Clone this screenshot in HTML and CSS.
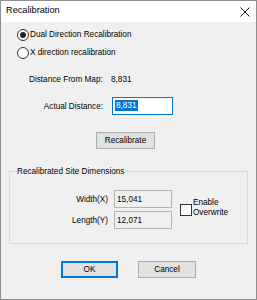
FILE: index.html
```html
<!DOCTYPE html>
<html>
<head>
<meta charset="utf-8">
<link rel="stylesheet" href="styles.css">
</head>
<body>
<div class="window">
  <div class="titlebar">
    <span class="title">Recalibration</span>
    <svg class="close" width="10" height="10" viewBox="0 0 10 10"><path d="M0.5 0.5L9.5 9.5M9.5 0.5L0.5 9.5" stroke="#111" stroke-width="1" fill="none"/></svg>
  </div>
  <div class="client">
    <div class="radio-row r1"><span class="radio checked"></span><span>Dual Direction Recalibration</span></div>
    <div class="radio-row r2"><span class="radio"></span><span>X direction recalibration</span></div>
    <div class="dist-grid">
      <span class="info-label">Distance From Map:</span><span class="info-value">8,831</span>
      <span class="actual-label">Actual Distance:</span><div class="edit focused"><span class="sel">8,831</span></div>
    </div>
    <div class="recal-row"><div class="btn recal">Recalibrate</div></div>
    <fieldset class="group">
      <legend>Recalibrated Site Dimensions</legend>
      <div class="group-body">
        <div class="dims">
          <span class="dim-label">Width(X)</span><div class="edit ro">15,041</div>
          <span class="dim-label">Length(Y)</span><div class="edit ro">12,071</div>
        </div>
        <div class="check-wrap"><span class="checkbox"></span><span class="check-label">Enable<br>Overwrite</span></div>
      </div>
    </fieldset>
    <div class="buttons"><div class="btn ok">OK</div><div class="btn cancel">Cancel</div></div>
  </div>
</div>
</body>
</html>
```
FILE: styles.css
```css
html, body { margin: 0; padding: 0; background: #f0f0f0; }
body { font-family: "Liberation Sans", Arial, sans-serif; font-size: 8.2px; color: #000; }
.window {
  width: 257px; height: 300px; box-sizing: border-box;
  border: 1px solid #8f8f8f; background: #f0f0f0;
}
.titlebar {
  height: 21px; background: #fff; display: flex; justify-content: space-between;
  align-items: flex-start; padding: 0 6px 0 5px;
}
.title { font-size: 9.2px; line-height: 12px; margin-top: 3px; color: #000; }
.close { margin-top: 6px; }
.client { padding: 0; }
.radio-row { display: flex; align-items: center; height: 13px; line-height: 13px; margin-left: 16px; }
.r1 { margin-top: 6px; }
.r2 { margin-top: 5px; }
.radio {
  width: 12px; height: 12px; box-sizing: border-box; border: 1px solid #333;
  border-radius: 50%; background: #fff; margin-right: 1px; position: relative; flex: none;
}
.radio.checked::after {
  content: ""; position: absolute; left: 2px; top: 2px; width: 6px; height: 6px;
  border-radius: 50%; background: #222;
}
.dist-grid {
  display: grid; grid-template-columns: 83px 61px; row-gap: 11px;
  margin: 14px 0 0 28px; align-items: center;
}
.info-label, .info-value { line-height: 13px; }
.info-value { margin-left: -1px; }
.actual-label { text-align: right; padding-right: 9px; }
.edit { box-sizing: border-box; height: 18px; line-height: 11px; padding: 2px 0 0 2px; }
.edit.focused { border: 1px solid #0078d7; background: #fff; }
.sel { background: #0078d7; color: #fff; display: inline-block; padding: 0 1px; }
.recal-row { margin: 17px 0 0 95px; }
.btn {
  box-sizing: border-box; height: 17px; background: #e1e1e1; border: 1px solid #adadad;
  display: flex; align-items: center; justify-content: center; line-height: 13px;
}
.recal { width: 59px; }
.group {
  margin: 16px 8px 0 8px; padding: 0; border: 1px solid #d9d9d9; min-width: 0;
}
.group legend { margin-left: 6px; padding: 0 1px; line-height: 13px; }
.group-body { display: flex; align-items: center; padding: 12px 0 14px 0; }
.dims {
  display: grid; grid-template-columns: 98px 58px; column-gap: 6px; row-gap: 3px; align-items: center;
}
.dim-label { text-align: right; }
.edit.ro { border: 1px solid #b4b4b4; background: #f0f0f0; padding-left: 2px; padding-top: 3px; }
.check-wrap { display: flex; align-items: center; margin-left: 8px; }
.checkbox {
  width: 12px; height: 12px; box-sizing: border-box; border: 1px solid #333; background: #fff; flex: none;
}
.check-label { margin-left: 1px; line-height: 10px; margin-top: -4px; }
.buttons { display: flex; gap: 20px; margin: 17px 0 0 60px; }
.ok { width: 57px; border: 2px solid #0078d7; }
.cancel { width: 58px; }
```
